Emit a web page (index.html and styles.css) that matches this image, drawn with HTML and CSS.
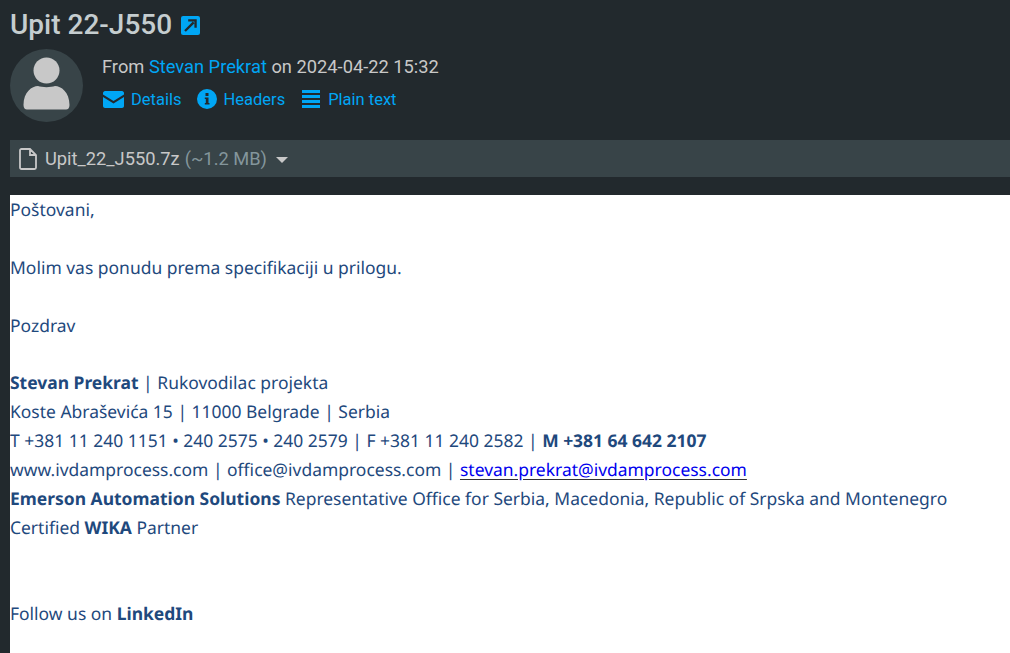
FILE: index.html
```html
<!DOCTYPE html>
<html lang="en">
<head>
  <meta charset="UTF-8" />
  <title>Upit 22-J550</title>
  <link rel="stylesheet" href="styles.css">
</head>
<body>

  <h1 class="subject">
    Upit 22-J550
    <a class="open-link" href="#">
      <svg viewBox="0 0 18 18" width="19" height="19"><rect width="18" height="18" rx="2" fill="#00a6f5"/><path d="M3.800 14.200 L12 6 M6.800 4.200 H13.800 V11.200" stroke="#22292d" stroke-width="2.200" fill="none"/></svg>
    </a>
  </h1>

  <div class="sender">
    <div class="avatar">
      <svg viewBox="0 0 73 73" width="73" height="73">
        <circle cx="36.500" cy="21.500" r="13" fill="#c8c8c8"/>
        <path d="M13.500 56 C13.500 43 22 37 28 37 C32 38.500 41 38.500 45 37 C51 37 59.500 43 59.500 56 C59.500 59 58 60.500 56 60.500 H17 C15 60.500 13.500 59 13.500 56 Z" fill="#c8c8c8"/>
      </svg>
    </div>
    <div class="sender-info">
      <div class="from">From <a href="#">Stevan Prekrat</a> on 2024-04-22 15:32</div>
      <div class="actions">
        <a href="#">
          <svg viewBox="0 0 21 17" width="21" height="17"><path d="M2 0 H19 C20 0 21 1 21 2 V3.500 L10.500 10 L0 3.500 V2 C0 1 1 0 2 0 Z M0 6 L10.500 12.500 L21 6 V15 C21 16 20 17 19 17 H2 C1 17 0 16 0 15 Z" fill="#00a6f5"/></svg>
          Details
        </a>
        <a href="#">
          <svg viewBox="0 0 20 20" width="20" height="20"><circle cx="10" cy="10" r="10" fill="#00a6f5"/><rect x="8.500" y="4" width="3" height="3" fill="#22292d"/><path d="M7.800 8.500 H11.500 V14 H12.500 V15.500 H7.800 V14 H8.800 V10 H7.800 Z" fill="#22292d"/></svg>
          Headers
        </a>
        <a href="#">
          <svg viewBox="0 0 18 18" width="18" height="18"><path d="M0 0 H18 V3 H0 Z M0 5 H18 V8 H0 Z M0 10 H18 V13 H0 Z M0 15 H18 V18 H0 Z" fill="#00a6f5"/></svg>
          Plain text
        </a>
      </div>
    </div>
  </div>

  <div class="attachment">
    <svg class="file-icon" viewBox="0 0 18 22" width="18" height="22"><path d="M2.500 1 H11 L17 7 V19.500 C17 20.300 16.300 21 15.500 21 H2.500 C1.700 21 1 20.300 1 19.500 V2.500 C1 1.700 1.700 1 2.500 1 Z M11 1 V7 H17" fill="none" stroke="#c8c8c8" stroke-width="1.800"/></svg>
    <span class="file-name">Upit_22_J550.7z</span>
    <span class="file-size">(~1.2 MB)</span>
    <span class="caret"></span>
  </div>

  <div class="message">
    <p>Poštovani,</p>
    <p>&nbsp;</p>
    <p>Molim vas ponudu prema specifikaciji u prilogu.</p>
    <p>&nbsp;</p>
    <p>Pozdrav</p>
    <p>&nbsp;</p>
    <p><b>Stevan Prekrat</b> | Rukovodilac projekta</p>
    <p>Koste Abraševića 15 | 11000 Belgrade | Serbia</p>
    <p>T +381 11 240 1151 • 240 2575 • 240 2579 | F +381 11 240 2582 | <b>M +381 64 642 2107</b></p>
    <p>www.ivdamprocess.com | office@ivdamprocess.com | <a href="#">stevan.prekrat@ivdamprocess.com</a></p>
    <p><b>Emerson Automation Solutions</b> Representative Office for Serbia, Macedonia, Republic of Srpska and Montenegro</p>
    <p>Certified <b>WIKA</b> Partner</p>
    <p>&nbsp;</p>
    <p>&nbsp;</p>
    <p>Follow us on <b>LinkedIn</b></p>
  </div>

</body>
</html>
```

FILE: styles.css
```css
html, body {
  height: 100%;
}

body {
  display: flex;
  flex-direction: column;
  box-sizing: border-box;
  margin: 0;
  padding: 0 0 0 10px;
  overflow: hidden;
  background: #22292d;
  font-family: Roboto, sans-serif;
  color: #c8c8c8;
}

a {
  text-decoration: none;
  color: #00a6f5;
}

.subject {
  display: flex;
  align-items: center;
  gap: 9px;
  margin: 0;
  height: 49px;
  font-size: 28px;
  font-weight: 500;
  color: #c5cdcf;
}

.open-link {
  display: flex;
  margin-top: 2px;
}

.sender {
  display: flex;
  gap: 19px;
}

.avatar {
  width: 73px;
  height: 73px;
  border-radius: 50%;
  background: #384448;
}

.sender-info {
  padding-top: 6px;
}

.from {
  font-size: 18.300px;
  line-height: 24px;
}

.actions {
  display: flex;
  gap: 15px;
  margin-top: 8px;
  padding-left: 1px;
  font-size: 16.500px;
}

.actions a {
  display: flex;
  align-items: center;
  gap: 7px;
  height: 24px;
}

.actions a:last-child {
  margin-left: 2px;
  gap: 8px;
}

.attachment {
  display: flex;
  align-items: center;
  margin-top: 18px;
  height: 37px;
  flex-shrink: 0;
  padding-left: 9px;
  background: #384448;
  font-size: 18.300px;
}

.file-icon {
  margin-right: 8px;
}

.file-name {
  margin-right: 5px;
}

.file-size {
  color: #84969c;
}

.caret {
  margin-left: 9px;
  margin-top: 2px;
  border-left: 6px solid transparent;
  border-right: 6px solid transparent;
  border-top: 6px solid #c8c8c8;
}

.message {
  flex: 1;
  min-height: 0;
  margin-top: 18px;
  padding-top: 1.300px;
  overflow: hidden;
  background: #fff;
  font-family: "Noto Sans", sans-serif;
  font-size: 17.470px;
  line-height: 28.840px;
  color: #1f497d;
  text-rendering: geometricPrecision;
}

.message p {
  margin: 0;
}

.message a {
  color: #0000ee;
  text-decoration: underline #333;
  text-underline-offset: 3px;
}
```
